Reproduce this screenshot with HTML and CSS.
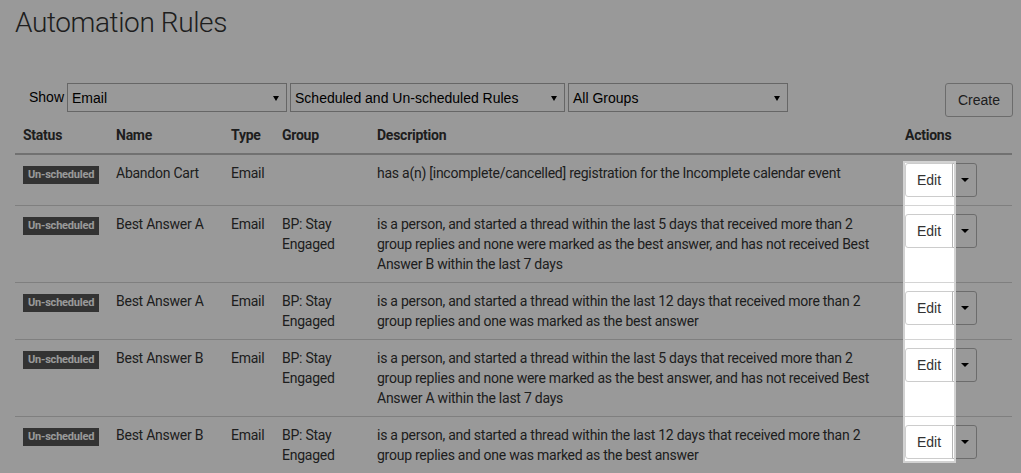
FILE: index.html
```html
<!DOCTYPE html>
<html lang="en">
<head>
<meta charset="utf-8">
<title>Automation Rules</title>
<link rel="stylesheet" href="styles.css">
</head>
<body>
<div class="page">
  <h1 class="title">Automation Rules</h1>

  <div class="filters">
    <label class="show-label">Show</label>
    <div class="select select-type"><span class="select-text">Email</span><span class="select-caret"></span></div>
    <div class="select select-schedule"><span class="select-text">Scheduled and Un-scheduled Rules</span><span class="select-caret"></span></div>
    <div class="select select-group"><span class="select-text">All Groups</span><span class="select-caret"></span></div>
    <button class="btn btn-create" type="button">Create</button>
  </div>

  <table class="rules">
    <colgroup>
      <col class="col-status">
      <col class="col-name">
      <col class="col-type">
      <col class="col-group">
      <col class="col-desc">
      <col class="col-actions">
    </colgroup>
    <thead>
      <tr>
        <th>Status</th>
        <th>Name</th>
        <th>Type</th>
        <th>Group</th>
        <th>Description</th>
        <th>Actions</th>
      </tr>
    </thead>
    <tbody>
      <tr>
        <td><span class="badge">Un-scheduled</span></td>
        <td>Abandon Cart</td>
        <td>Email</td>
        <td></td>
        <td>has a(n) [incomplete/cancelled] registration for the Incomplete calendar event</td>
        <td><div class="btn-group"><button class="btn btn-edit" type="button">Edit</button><button class="btn btn-toggle" type="button"><span class="caret"></span></button></div></td>
      </tr>
      <tr>
        <td><span class="badge">Un-scheduled</span></td>
        <td>Best Answer A</td>
        <td>Email</td>
        <td>BP: Stay Engaged</td>
        <td>is a person, and started a thread within the last 5 days that received more than 2 group replies and none were marked as the best answer, and has not received Best Answer B within the last 7 days</td>
        <td><div class="btn-group"><button class="btn btn-edit" type="button">Edit</button><button class="btn btn-toggle" type="button"><span class="caret"></span></button></div></td>
      </tr>
      <tr>
        <td><span class="badge">Un-scheduled</span></td>
        <td>Best Answer A</td>
        <td>Email</td>
        <td>BP: Stay Engaged</td>
        <td>is a person, and started a thread within the last 12 days that received more than 2 group replies and one was marked as the best answer</td>
        <td><div class="btn-group"><button class="btn btn-edit" type="button">Edit</button><button class="btn btn-toggle" type="button"><span class="caret"></span></button></div></td>
      </tr>
      <tr>
        <td><span class="badge">Un-scheduled</span></td>
        <td>Best Answer B</td>
        <td>Email</td>
        <td>BP: Stay Engaged</td>
        <td>is a person, and started a thread within the last 5 days that received more than 2 group replies and none were marked as the best answer, and has not received Best Answer A within the last 7 days</td>
        <td><div class="btn-group"><button class="btn btn-edit" type="button">Edit</button><button class="btn btn-toggle" type="button"><span class="caret"></span></button></div></td>
      </tr>
      <tr>
        <td><span class="badge">Un-scheduled</span></td>
        <td>Best Answer B</td>
        <td>Email</td>
        <td>BP: Stay Engaged</td>
        <td>is a person, and started a thread within the last 12 days that received more than 2 group replies and one was marked as the best answer</td>
        <td><div class="btn-group"><button class="btn btn-edit" type="button">Edit</button><button class="btn btn-toggle" type="button"><span class="caret"></span></button></div></td>
      </tr>
    </tbody>
  </table>
</div>

<div class="spotlight"></div>
</body>
</html>
```

FILE: styles.css
```css
html, body {
  margin: 0;
  padding: 0;
  background: #ffffff;
  overflow: hidden;
}

body {
  font-family: Roboto, "Liberation Sans", sans-serif;
  font-size: 14px;
  color: #333333;
  position: relative;
  height: 473px;
}

.page {
  width: 997px;
  padding-left: 15px;
}

.title {
  margin: 3px 0 0 0;
  height: 40px;
  line-height: 40px;
  font-size: 28px;
  font-weight: 300;
  color: #333333;
  letter-spacing: -0.4px;
}

.filters {
  margin-top: 40px;
  margin-right: -1px;
  height: 34px;
  display: flex;
  align-items: flex-start;
  padding-left: 14px;
  font-family: "Liberation Sans", Arial, sans-serif;
  font-size: 14px;
  color: #000;
}

.show-label {
  line-height: 29px;
  margin-right: 3px;
}

.select {
  position: relative;
  box-sizing: border-box;
  height: 29px;
  border: 1px solid #aaaaaa;
  background: #ffffff;
  padding: 0 20px 0 4px;
  line-height: 28px;
  white-space: nowrap;
  margin-right: 3px;
}

.select-type { width: 220px; }
.select-schedule { width: 275px; }
.select-group { width: 220px; }

.select-caret {
  position: absolute;
  right: 7px;
  top: 12px;
  width: 0;
  height: 0;
  border-left: 3.5px solid transparent;
  border-right: 3.5px solid transparent;
  border-top: 5px solid #000;
}

.btn {
  font-family: "Liberation Sans", Arial, sans-serif;
  font-size: 14px;
  color: #333333;
  background: #ffffff;
  border: 1px solid #b5b5b5;
  border-radius: 3px;
  box-sizing: border-box;
  cursor: pointer;
  margin: 0;
}

.btn-create {
  margin-left: auto;
  height: 34px;
  width: 68px;
  padding: 0;
}

.rules {
  width: 997px;
  border-collapse: collapse;
  table-layout: fixed;
  letter-spacing: -0.25px;
}

.col-status { width: 93px; }
.col-name { width: 115px; }
.col-type { width: 51px; }
.col-group { width: 95px; }
.col-desc { width: 528px; }
.col-actions { width: 115px; }

.rules th {
  text-align: left;
  font-weight: 700;
  padding: 8px;
  line-height: 20px;
  border-bottom: 2px solid #bcbcbc;
}

.rules td {
  padding: 8px;
  line-height: 20px;
  vertical-align: top;
  border-bottom: 1px solid #d4d4d4;
}

.badge {
  display: inline-block;
  vertical-align: top;
  white-space: nowrap;
  margin-top: 3px;
  height: 18px;
  line-height: 18px;
  padding: 0 5px;
  background: #555555;
  color: #ffffff;
  font-size: 11px;
  font-weight: 700;
  letter-spacing: -0.2px;
}

.btn-group {
  display: flex;
}

.btn-edit {
  width: 48px;
  height: 34px;
  border-radius: 3px 0 0 3px;
  border-color: #cccccc;
  padding: 0;
}

.btn-toggle {
  width: 25px;
  height: 34px;
  margin-left: -1px;
  border-radius: 0 3px 3px 0;
  padding: 0;
  display: flex;
  align-items: center;
  justify-content: center;
}

.caret {
  width: 0;
  height: 0;
  border-left: 4px solid transparent;
  border-right: 4px solid transparent;
  border-top: 4px solid #000;
}

.spotlight {
  position: absolute;
  left: 903px;
  top: 161px;
  width: 53px;
  height: 302px;
  box-sizing: border-box;
  border: 2px solid #d2d2d2;
  box-shadow: 0 0 0 3000px rgba(0, 0, 0, 0.4);
  pointer-events: none;
}
```
